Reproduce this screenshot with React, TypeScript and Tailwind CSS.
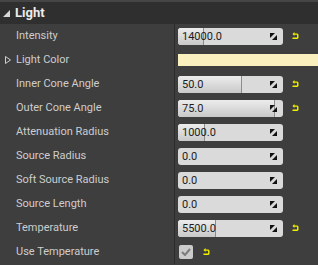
import React from "react";

const ResetIcon = () => (
  <svg width="7" height="8" viewBox="0 0 7 8" className="shrink-0">
    <path d="M0.5 2 L2.5 0 L2.5 1.4 L5.5 1.4 L6.5 2.4 L6.5 6 L5.5 7 L0.5 7 L0.5 5.6 L5.1 5.6 L5.1 2.8 L2.5 2.8 L2.5 4 Z" fill="#f0f000" />
  </svg>
);

const DragIcon = () => (
  <svg width="7" height="7" viewBox="0 0 7 7" className="absolute right-[6px] top-[5px]">
    <polygon points="0,0 5,0 0,5" fill="#111" />
    <polygon points="7,2 7,7 2,7" fill="#111" />
  </svg>
);

type Row = {
  label: string;
  value?: string;
  fill?: number;
  reset?: boolean;
  kind?: "num" | "color" | "check";
  expander?: boolean;
};

const rows: Row[] = [
  { label: "Intensity", value: "14000.0", fill: 26, reset: true },
  { label: "Light Color", kind: "color", expander: true },
  { label: "Inner Cone Angle", value: "50.0", fill: 64, reset: true },
  { label: "Outer Cone Angle", value: "75.0", fill: 97, reset: true },
  { label: "Attenuation Radius", value: "1000.0", fill: 27 },
  { label: "Source Radius", value: "0.0" },
  { label: "Soft Source Radius", value: "0.0" },
  { label: "Source Length", value: "0.0" },
  { label: "Temperature", value: "5500.0", fill: 38, reset: true },
  { label: "Use Temperature", kind: "check", reset: true },
];

const NumBox = ({ value, fill }: { value: string; fill?: number }) => (
  <div className="relative w-[105px] h-[17px] rounded-[3px] bg-[#dadada] overflow-hidden shrink-0 flex items-center leading-none">
    {fill ? (
      <div
        className="absolute left-0 top-0 h-full bg-gradient-to-b from-[#ececec] to-[#c9c9c9] border-r border-[#8c8c8c]"
        style={{ width: fill }}
      />
    ) : null}
    <span className="relative pl-[4px] text-[11px] text-[#1c1c1c]">{value}</span>
    <DragIcon />
  </div>
);

export default function App() {
  return (
    <div className="w-[318px] h-[265px] overflow-hidden bg-[#3e3e3e] font-['Roboto',sans-serif] select-none">
      <div className="h-[24px] bg-[#2f2f2f] border-t-2 border-[#454545] flex items-center">
        <svg width="7" height="7" viewBox="0 0 7 7" className="ml-[3px]">
          <polygon points="7,0 7,7 0,7" fill="#d8d8d8" />
        </svg>
        <span className="ml-[5px] text-[13px] font-bold text-[#ececec]">Light</span>
      </div>
      {rows.map((r) => (
        <div key={r.label} className="h-[24px] flex">
          <div className="w-[175px] shrink-0 border-r border-[#2b2b2b] flex items-center relative">
            {r.expander && (
              <svg width="6" height="8" viewBox="0 0 6 8" className="absolute left-[5px]">
                <polygon points="0.5,0.5 5.5,4 0.5,7.5" fill="none" stroke="#cfcfcf" strokeWidth="1" />
              </svg>
            )}
            <span className="pl-[16px] text-[11px] text-[#cdcdcd]">{r.label}</span>
          </div>
          <div className="flex-1 flex items-center pl-[3px]">
            {r.kind === "color" ? (
              <div className="h-[12px] flex-1 bg-[#f9f0bd]" />
            ) : r.kind === "check" ? (
              <>
                <div className="ml-[1px] w-[14px] h-[14px] rounded-[2px] bg-[#cbcbcb] flex items-center justify-center">
                  <svg width="10" height="8" viewBox="0 0 10 8">
                    <path d="M1 4 L4 7 L9 1" fill="none" stroke="#7c7c7c" strokeWidth="2" />
                  </svg>
                </div>
                <div className="ml-[10px]"><ResetIcon /></div>
              </>
            ) : (
              <>
                <NumBox value={r.value!} fill={r.fill} />
                {r.reset && <div className="ml-[9px]"><ResetIcon /></div>}
              </>
            )}
          </div>
        </div>
      ))}
    </div>
  );
}
